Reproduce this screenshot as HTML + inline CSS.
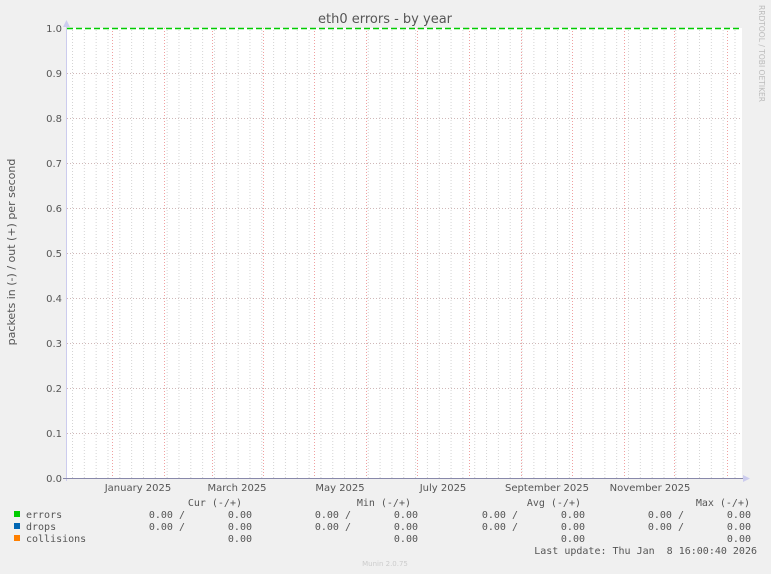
<!DOCTYPE html>
<html><head><meta charset="utf-8"><style>
html,body{margin:0;padding:0;background:#f0f0f0;}
svg{display:block;}
.t{font-family:"DejaVu Sans","Liberation Sans",sans-serif;fill:#555;}
.m{font-family:"DejaVu Sans Mono","Liberation Mono",monospace;font-size:10px;fill:#555;}
</style></head><body>
<svg width="771" height="574" viewBox="0 0 771 574" xmlns="http://www.w3.org/2000/svg">
<defs>
<pattern id="wk" x="72" y="0" width="11.83" height="574" patternUnits="userSpaceOnUse">
<line x1="0.5" y1="0" x2="0.5" y2="574" stroke="#d4d4d4" stroke-width="1" stroke-dasharray="1,2"/>
</pattern>
</defs>
<rect width="771" height="574" fill="#f0f0f0"/>
<rect x="67" y="28" width="675" height="450" fill="#fff"/>
<rect x="67" y="28" width="675" height="450" fill="url(#wk)"/>
<g stroke="#f0a0a0" stroke-width="1" stroke-dasharray="1,2">
<line x1="112.5" y1="28" x2="112.5" y2="478"/><line x1="164.5" y1="28" x2="164.5" y2="478"/>
<line x1="212.5" y1="28" x2="212.5" y2="478"/><line x1="263.5" y1="28" x2="263.5" y2="478"/>
<line x1="314.5" y1="28" x2="314.5" y2="478"/><line x1="366.5" y1="28" x2="366.5" y2="478"/>
<line x1="417.5" y1="28" x2="417.5" y2="478"/><line x1="469.5" y1="28" x2="469.5" y2="478"/>
<line x1="521.5" y1="28" x2="521.5" y2="478"/><line x1="572.5" y1="28" x2="572.5" y2="478"/>
<line x1="624.5" y1="28" x2="624.5" y2="478"/><line x1="674.5" y1="28" x2="674.5" y2="478"/>
<line x1="727.5" y1="28" x2="727.5" y2="478"/>
</g>
<g stroke="#d0b8b8" stroke-width="1" stroke-dasharray="1,2">
<line x1="67" y1="73.5" x2="742" y2="73.5"/><line x1="67" y1="118.5" x2="742" y2="118.5"/>
<line x1="67" y1="163.5" x2="742" y2="163.5"/><line x1="67" y1="208.5" x2="742" y2="208.5"/>
<line x1="67" y1="253.5" x2="742" y2="253.5"/><line x1="67" y1="298.5" x2="742" y2="298.5"/>
<line x1="67" y1="343.5" x2="742" y2="343.5"/><line x1="67" y1="388.5" x2="742" y2="388.5"/>
<line x1="67" y1="433.5" x2="742" y2="433.5"/>
</g>
<line x1="67" y1="28.5" x2="742" y2="28.5" stroke="#00cc00" stroke-width="1.5" stroke-dasharray="6,3"/>
<line x1="66.5" y1="24" x2="66.5" y2="481" stroke="#ccccee"/>
<polygon points="63,27 66.5,20 70,27" fill="#ccccee"/>
<line x1="63" y1="478.5" x2="745" y2="478.5" stroke="#8888aa"/>
<polygon points="743,475 750,478.5 743,482" fill="#ccccee"/>
<g class="t" font-size="10" text-anchor="end">
<text x="62" y="32">1.0</text><text x="62" y="77">0.9</text><text x="62" y="122">0.8</text>
<text x="62" y="167">0.7</text><text x="62" y="212">0.6</text><text x="62" y="257">0.5</text>
<text x="62" y="302">0.4</text><text x="62" y="347">0.3</text><text x="62" y="392">0.2</text>
<text x="62" y="437">0.1</text><text x="62" y="482">0.0</text>
</g>
<g class="t" font-size="10" text-anchor="middle">
<text x="138" y="491">January 2025</text><text x="237" y="491">March 2025</text>
<text x="340" y="491">May 2025</text><text x="443" y="491">July 2025</text>
<text x="547" y="491">September 2025</text><text x="650" y="491">November 2025</text>
</g>
<text class="t" x="385" y="23" font-size="13" text-anchor="middle">eth0 errors - by year</text>
<text class="t" font-size="11" text-anchor="middle" transform="translate(15,252) rotate(-90)">packets in (-) / out (+) per second</text>
<text font-family="DejaVu Sans,sans-serif" font-size="7.5" fill="#bbb" text-anchor="start" transform="translate(759,5) rotate(90)" textLength="97" lengthAdjust="spacingAndGlyphs">RRDTOOL / TOBI OETIKER</text>
<rect x="14" y="511" width="6" height="6" fill="#00cc00"/>
<rect x="14" y="523" width="6" height="6" fill="#0066b3"/>
<rect x="14" y="535" width="6" height="6" fill="#ff8000"/>
<g class="m">
<text x="26" y="518">errors</text><text x="26" y="530">drops</text><text x="26" y="542">collisions</text>
</g>
<g class="m" text-anchor="end">
<text x="242" y="506">Cur (-/+)</text><text x="411" y="506">Min (-/+)</text>
<text x="581" y="506">Avg (-/+)</text><text x="750" y="506">Max (-/+)</text>
<text x="185" y="518">0.00 /</text><text x="252" y="518">0.00</text>
<text x="351" y="518">0.00 /</text><text x="418" y="518">0.00</text>
<text x="518" y="518">0.00 /</text><text x="585" y="518">0.00</text>
<text x="684" y="518">0.00 /</text><text x="751" y="518">0.00</text>
<text x="185" y="530">0.00 /</text><text x="252" y="530">0.00</text>
<text x="351" y="530">0.00 /</text><text x="418" y="530">0.00</text>
<text x="518" y="530">0.00 /</text><text x="585" y="530">0.00</text>
<text x="684" y="530">0.00 /</text><text x="751" y="530">0.00</text>
<text x="252" y="542">0.00</text><text x="418" y="542">0.00</text>
<text x="585" y="542">0.00</text><text x="751" y="542">0.00</text>
<text x="757" y="554">Last update: Thu Jan &#160;8 16:00:40 2026</text>
</g>
<text font-family="DejaVu Sans,sans-serif" font-size="7" fill="#ccc" x="385" y="566" text-anchor="middle">Munin 2.0.75</text>
</svg>
</body></html>
